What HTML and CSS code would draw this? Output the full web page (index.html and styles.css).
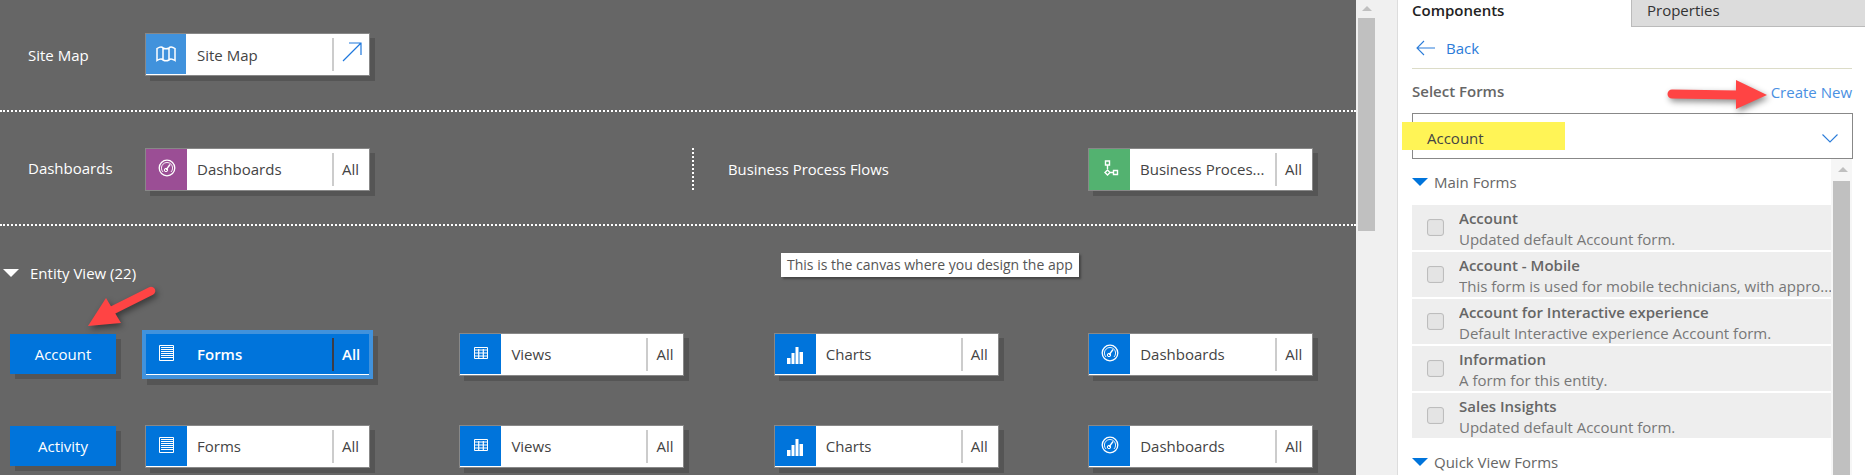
FILE: index.html
```html
<!DOCTYPE html>
<html lang="en">
<head>
<meta charset="utf-8">
<title>App Designer</title>
<link rel="stylesheet" href="styles.css">
</head>
<body>
<svg width="0" height="0" class="defs">
  <symbol id="i-map" viewBox="0 0 20 16"><path d="M1 2.5 C4 0.5 6 0.5 7 2 C9 3 11 3 13 2 C14 0.5 16 0.5 19 2.5 V14.5 C16 12.5 14 12.5 13 14 C11 15 9 15 7 14 C6 12.5 4 12.5 1 14.5 Z M7 2 V14 M13 2 V14" fill="none" stroke="#fff" stroke-width="1.5"/></symbol>
  <symbol id="i-gauge" viewBox="0 0 18 18"><circle cx="9" cy="9" r="7.8" fill="none" stroke="#fff" stroke-width="1.3"/><path d="M5 13 A5.6 5.6 0 1 1 13 13" fill="none" stroke="#fff" stroke-width=".9"/><path d="M8 11 L12 5.500" stroke="#fff" stroke-width="1.300"/><circle cx="8" cy="11" r="1.700" fill="none" stroke="#fff" stroke-width="1"/></symbol>
  <symbol id="i-flow" viewBox="0 0 16 18"><path d="M2.5 1 H6.5 V5 H2.5 Z M4.5 5 V9 M4.5 10 L7 12.5 L4.5 15 L2 12.5 Z M7 12.5 H10.5 M10.5 10.5 H14.5 V14.5 H10.5 Z" fill="none" stroke="#fff" stroke-width="1.4"/></symbol>
  <symbol id="i-form" viewBox="0 0 15 16"><path d="M.5.5 H14.5 V15.5 H.5 Z" fill="none" stroke="#fff" stroke-width="1"/><path d="M2 2.500 H15 M2 4.500 H15 M2 6.500 H15 M2 8.500 H15 M2 10.500 H15 M2 12.500 H15" stroke="#fff" stroke-width="1"/></symbol>
  <symbol id="i-grid" viewBox="0 0 14 12"><path d="M.5.5 H13.5 V11.5 H.5 Z" fill="#0074db" stroke="#fff"/><path d="M0 3 H14 M0 6 H14 M0 9 H14 M4.7 2 V12 M9.3 2 V12" stroke="#fff" stroke-width="1.2"/></symbol>
  <symbol id="i-chart" viewBox="0 0 16 17"><path d="M0 11 H3.5 V17 H0 Z M4.5 6 H7.500 V17 H4.500 Z M8.500 0 H11.500 V17 H8.500 Z M12.500 5 H16 V17 H12.500 Z" fill="#fff"/></symbol>
</svg>

<div class="app">
  <main class="canvas">
    <section class="band band-first">
      <div class="label">Site Map</div>
      <div class="tile tile-map">
        <div class="tile-icon"><svg class="ic ic-map"><use href="#i-map"/></svg></div>
        <div class="tile-name">Site Map</div>
        <div class="tile-end"><svg class="ic ic-open" viewBox="0 0 20 20"><path d="M1 19 L19 1 M7 1 H19 V13" fill="none" stroke="#1f78dc" stroke-width="1.2"/></svg></div>
      </div>
    </section>
    <section class="band band-second">
      <div class="label">Dashboards</div>
      <div class="tile tile-purple">
        <div class="tile-icon"><svg class="ic ic-gauge"><use href="#i-gauge"/></svg></div>
        <div class="tile-name">Dashboards</div>
        <div class="tile-end">All</div>
      </div>
      <div class="bpf">
        <div class="label bpf-label">Business Process Flows</div>
        <div class="tile tile-green">
          <div class="tile-icon"><svg class="ic ic-flow"><use href="#i-flow"/></svg></div>
          <div class="tile-name">Business Proces...</div>
          <div class="tile-end">All</div>
        </div>
      </div>
    </section>
    <section class="entities">
      <div class="entity-head"><span class="tri-white"></span>Entity View (22)</div>
      <div class="entity-row">
        <div class="entity-btn">Account</div>
        <div class="tile tile-active">
          <div class="tile-icon"><svg class="ic ic-form"><use href="#i-form"/></svg></div>
          <div class="tile-name">Forms</div>
          <div class="tile-end">All</div>
        </div>
        <div class="tile">
          <div class="tile-icon"><svg class="ic ic-grid"><use href="#i-grid"/></svg></div>
          <div class="tile-name">Views</div>
          <div class="tile-end">All</div>
        </div>
        <div class="tile">
          <div class="tile-icon"><svg class="ic ic-chart"><use href="#i-chart"/></svg></div>
          <div class="tile-name">Charts</div>
          <div class="tile-end">All</div>
        </div>
        <div class="tile">
          <div class="tile-icon"><svg class="ic ic-gauge"><use href="#i-gauge"/></svg></div>
          <div class="tile-name">Dashboards</div>
          <div class="tile-end">All</div>
        </div>
      </div>
      <div class="entity-row entity-row-next">
        <div class="entity-btn">Activity</div>
        <div class="tile">
          <div class="tile-icon"><svg class="ic ic-form"><use href="#i-form"/></svg></div>
          <div class="tile-name">Forms</div>
          <div class="tile-end">All</div>
        </div>
        <div class="tile">
          <div class="tile-icon"><svg class="ic ic-grid"><use href="#i-grid"/></svg></div>
          <div class="tile-name">Views</div>
          <div class="tile-end">All</div>
        </div>
        <div class="tile">
          <div class="tile-icon"><svg class="ic ic-chart"><use href="#i-chart"/></svg></div>
          <div class="tile-name">Charts</div>
          <div class="tile-end">All</div>
        </div>
        <div class="tile">
          <div class="tile-icon"><svg class="ic ic-gauge"><use href="#i-gauge"/></svg></div>
          <div class="tile-name">Dashboards</div>
          <div class="tile-end">All</div>
        </div>
      </div>
    </section>
    <div class="tooltip">This is the canvas where you design the app</div>
    <svg class="arrow arrow-account" viewBox="0 0 90 60"><path d="M67 7 L29 26" stroke="#ff4444" stroke-width="8.500" stroke-linecap="round"/><path d="M4 42 L22 14 L37 39 Z" fill="#ff4444"/></svg>
  </main>

  <div class="canvas-scroll"><span class="up-arrow"></span><div class="canvas-thumb"></div></div>

  <aside class="panel">
    <div class="tabs">
      <div class="tab tab-on">Components</div>
      <div class="tab tab-off">Properties</div>
    </div>
    <div class="body">
      <div class="back">
        <svg class="back-arrow" viewBox="0 0 19 16"><path d="M19 8 H1 M8 1 L1 8 L8 15" fill="none" stroke="#2b7cd9" stroke-width="1.1"/></svg>
        <span>Back</span>
      </div>
      <div class="select-head">
        <span class="select-title">Select Forms</span>
        <span class="create">Create New</span>
      </div>
      <div class="select">
        <div class="marker"></div>
        <span class="select-value">Account</span>
        <svg class="chev" viewBox="0 0 16 9"><path d="M.5.5 L8 8 L15.500.5" fill="none" stroke="#2b7cd9" stroke-width="1.1"/></svg>
      </div>
      <div class="list-wrap">
        <div class="list">
          <div class="group"><span class="tri-blue"></span>Main Forms</div>
          <div class="rows">
            <div class="row"><span class="check"></span><div class="row-text"><div class="row-title">Account</div><div class="row-desc">Updated default Account form.</div></div></div>
            <div class="row"><span class="check"></span><div class="row-text"><div class="row-title">Account - Mobile</div><div class="row-desc">This form is used for mobile technicians, with appro...</div></div></div>
            <div class="row"><span class="check"></span><div class="row-text"><div class="row-title">Account for Interactive experience</div><div class="row-desc">Default Interactive experience Account form.</div></div></div>
            <div class="row"><span class="check"></span><div class="row-text"><div class="row-title">Information</div><div class="row-desc">A form for this entity.</div></div></div>
            <div class="row"><span class="check"></span><div class="row-text"><div class="row-title">Sales Insights</div><div class="row-desc">Updated default Account form.</div></div></div>
          </div>
          <div class="group group-next"><span class="tri-blue"></span>Quick View Forms</div>
        </div>
        <div class="list-scroll"><span class="up-arrow up-small"></span><div class="list-thumb"></div></div>
      </div>
    </div>
    <svg class="arrow arrow-create" viewBox="0 0 104 36"><path d="M6 17 L72 18" stroke="#ff4444" stroke-width="9" stroke-linecap="round"/><path d="M70 3 L101 18 L70 32 Z" fill="#ff4444"/></svg>
  </aside>
</div>
</body>
</html>
```
FILE: styles.css
```css
* { box-sizing: border-box; }
html, body { margin: 0; padding: 0; width: 1865px; height: 475px; overflow: hidden; }
body { font-family: "Open Sans", "Noto Sans", sans-serif; font-size: 15px; color: #444; background: #fff; }
.defs { position: absolute; }
.app { display: flex; width: 1865px; height: 475px; position: relative; }

.canvas { width: 1356px; height: 475px; background: #666; position: relative; flex: none; }
.band { display: flex; align-items: center; padding-left: 28px; border-bottom: 2px dotted #fff; }
.band-first { height: 112px; padding-bottom: 1px; padding-top: 0; align-items: flex-start; }
.band-first .label, .band-first .tile { margin-top: 33px; }
.band-first .label { line-height: 45px; }
.band-second { height: 114px; align-items: flex-start; }
.band-second > .label, .band-second > .tile { margin-top: 36px; }
.band-second > .label { line-height: 41px; }
.label { width: 117px; color: #fff; font-size: 15px; flex: none; }

.tile { width: 225px; height: 43px; flex: none; display: flex; align-items: stretch; background: #fff; border: 1px solid #888; box-shadow: 5px 5px 0 #555; color: #444; }
.tile-icon { width: 41px; flex: none; background: #0074db; display: flex; align-items: center; justify-content: center; margin-bottom: 1px; }
.tile-name { flex: 1; padding-left: 10px; line-height: 41px; font-size: 15px; white-space: nowrap; overflow: hidden; }
.tile-end { width: 37px; flex: none; margin: 4px 0; padding-left: 8px; border-left: 2px solid #ccc; line-height: 32px; font-size: 15px; }
.tile-map .tile-icon { background: #4192dc; width: 40px; }
.tile-map .tile-name { padding-left: 11px; line-height: 43px; }
.tile-purple .tile-icon { background: #9b4e95; margin-bottom: 0; }
.tile-green .tile-icon { background: #53b270; margin-bottom: 0; }
.tile-active { background: #0074db; color: #fff; font-weight: 600; border-color: #4192dc; border-bottom: 1px solid #4192dc; box-shadow: 0 0 0 3px #4192dc, 5px 6px 0 3px #555; }
.tile-active .tile-name, .tile-active .tile-end { color: #fff; }
.tile-active .tile-end { border-left-color: #3c3c46; }
.tile-active { background-image: linear-gradient(#fff, #fff); background-size: 100% 1px; background-repeat: no-repeat; background-position: 0 100%; }
.tile-active .tile-icon { margin-bottom: 1px; }

.ic { display: block; }
.ic-map { width: 20px; height: 16px; }
.ic-gauge { width: 18px; height: 18px; margin-top: -3px; }
.ic-flow { width: 16px; height: 18px; margin-top: -1px; margin-left: 2px; }
.ic-form { width: 15px; height: 16px; margin-top: -2px; margin-left: -1px; }
.ic-grid { width: 14px; height: 12px; margin-top: -2px; }
.ic-chart { width: 16px; height: 17px; margin-top: 2px; }
.ic-open { width: 20px; height: 20px; margin: 4px 0 0 0; }
.tile-map .tile-end { padding-left: 8px; }

.bpf { margin-left: 322px; display: flex; align-items: center; margin-top: 36px; height: 42px; width: 640px; border-left: 2px dotted #fff; }
.bpf-label { width: 360px; margin-left: 34px; font-size: 14.800px; }

.entities { padding-left: 10px; }
.entity-head { margin-left: -7px; height: 64px; display: flex; align-items: center; color: #fff; font-size: 15px; padding-top: 29px; }
.tri-white { width: 0; height: 0; border-left: 8.500px solid transparent; border-right: 8.500px solid transparent; border-top: 8px solid #fff; margin: 0 11px 0 0; }
.entity-row { display: flex; align-items: flex-start; gap: 89.4px; margin-top: 43px; padding-left: 135px; position: relative; }
.entity-row-next { margin-top: 49px; }
.entity-btn { position: absolute; left: 0; top: 1px; width: 106px; height: 40px; background: #0074db; color: #fff; text-align: center; line-height: 40px; font-size: 15px; box-shadow: 5px 5px 0 #555; }

.tooltip { position: absolute; left: 781px; top: 253px; height: 24px; padding: 0 6px; background: #fff; color: #555; font-size: 14px; line-height: 23px; white-space: nowrap; box-shadow: 2px 2px 2px #444; }

.arrow { position: absolute; overflow: visible; filter: drop-shadow(2px 3px 3px rgba(0,0,0,.45)); }
.arrow-account { left: 84px; top: 284px; width: 90px; height: 60px; }
.arrow-create { left: 268px; top: 77px; width: 104px; height: 36px; }

.canvas-scroll { width: 41px; flex: none; background: #f0f0f0; padding: 18px 0 0 2px; position: relative; }
.canvas-thumb { width: 17px; height: 213px; background: #c0c0c0; }
.up-arrow { position: absolute; left: 6px; top: 6px; width: 0; height: 0; border-left: 5px solid transparent; border-right: 5px solid transparent; border-bottom: 5px solid #c0c0c0; }

.panel { flex: 1; border-left: 1px solid #ddd; position: relative; background: #fff; }
.tabs { display: flex; height: 27px; }
.tab { font-size: 15px; line-height: 21px; }
.tab-on { width: 233px; padding-left: 14px; color: #222; font-weight: 600; }
.tab-off { flex: 1; padding-left: 15px; background: #dcdcdc; color: #333; border-left: 1px solid #bbb; border-bottom: 1px solid #bbb; }
.body { padding: 0 13px 0 14px; }
.back { height: 42px; border-bottom: 1px solid #dcdcc8; display: flex; align-items: center; gap: 11px; color: #2b7cd9; font-size: 15px; padding: 0 0 0 4px; }
.back-arrow { width: 19px; height: 16px; }
.select-head { display: flex; justify-content: space-between; align-items: center; height: 44px; }
.select-title { color: #666; font-weight: 600; font-size: 15px; }
.create { color: #4a90e2; font-size: 15px; margin-top: 1px; }
.select { width: 441px; height: 46px; border: 1px solid #888; display: flex; align-items: center; justify-content: space-between; padding: 0 14px; font-size: 15px; position: relative; margin-right: -3px; background: transparent; }
.select-value { color: #444; position: relative; margin-top: 3px; }
.chev { width: 16px; height: 9px; margin-top: 4px; }
.marker { position: absolute; left: -11px; top: 8px; width: 163px; height: 28px; background: #fff456; }

.list-wrap { display: flex; }
.list { width: 419px; flex: none; }
.group { display: flex; align-items: center; height: 46px; color: #666; font-size: 15px; font-weight: 500; }
.group-next { height: 48px; }
.tri-blue { width: 0; height: 0; border-left: 8px solid transparent; border-right: 8px solid transparent; border-top: 8px solid #0074db; margin: 0 6px 0 0; }
.rows { display: flex; flex-direction: column; gap: 2px; }
.row { height: 45px; background: #eee; display: flex; align-items: center; }
.check { width: 17px; height: 17px; margin: 0 15px; flex: none; background: #e4e4e4; border: 1px solid #bdbdbd; border-radius: 3px; box-shadow: inset 0 0 1px #ccc; }
.row-text { min-width: 0; flex: 1; white-space: nowrap; overflow: hidden; }
.row-title { color: #666; font-weight: 600; font-size: 15px; line-height: 22px; }
.row-desc { color: #777; font-size: 15px; line-height: 20px; }
.list-scroll { flex: 1; background: #f6f6f6; position: relative; padding: 22px 0 0 2px; min-height: 315px; }
.list-thumb { width: 17px; height: 300px; background: #c0c0c0; }
.up-small { left: 7px; top: 8px; }
```
